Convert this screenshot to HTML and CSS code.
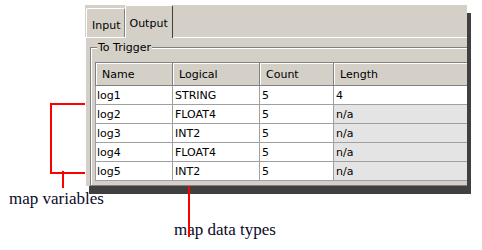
FILE: index.html
```html
<!DOCTYPE html>
<html>
<head>
<meta charset="utf-8">
<title>Output mapping</title>
<link rel="stylesheet" href="styles.css">
</head>
<body>
<div class="figure">
	<div class="frame">
		<div class="shadow"></div>
		<div class="widget">
			<div class="tab-strip">
				<span class="tab">Input</span>
				<span class="tab active">Output</span>
			</div>
			<div class="tab-page">
				<fieldset class="group">
					<legend>To Trigger</legend>
					<table class="grid">
						<colgroup>
							<col class="c-name"><col class="c-logical"><col class="c-count"><col class="c-length">
						</colgroup>
						<thead>
							<tr><th>Name</th><th>Logical</th><th>Count</th><th>Length</th></tr>
						</thead>
						<tbody>
							<tr><td>log1</td><td>STRING</td><td>5</td><td>4</td></tr>
							<tr><td>log2</td><td>FLOAT4</td><td>5</td><td class="ro">n/a</td></tr>
							<tr><td>log3</td><td>INT2</td><td>5</td><td class="ro">n/a</td></tr>
							<tr><td>log4</td><td>FLOAT4</td><td>5</td><td class="ro">n/a</td></tr>
							<tr><td>log5</td><td>INT2</td><td>5</td><td class="ro">n/a</td></tr>
						</tbody>
					</table>
				</fieldset>
			</div>
		</div>
	</div>

	<!-- callouts -->
	<div class="bracket"></div>
	<div class="stem stem-vars"></div>
	<div class="stem stem-types"></div>
	<span class="note note-vars">map variables</span>
	<span class="note note-types">map data types</span>
</div>
</body>
</html>
```

FILE: styles.css
```css
html, body {margin: 0; padding: 0; background: #fff;}

.figure {
	position: relative;
	width: 482px;
	height: 250px;
	overflow: hidden;
	padding-top: 5px;
	box-sizing: border-box;
}

/* widget and its dark drop shadow share one grid cell */
.frame {
	display: grid;
	width: 386px;
	margin-left: 85px;
}

.shadow,
.widget {
	grid-area: 1 / 1;
}

.shadow {
	margin: 8px 0 0 4px;
	background: #404040;
}

.widget {
	margin: 0 4px 8px 0;
	height: 181px;
	background: #d4d0c8;
	font: 11px "DejaVu Sans", Verdana, sans-serif;
	color: #000;
	overflow: hidden;
	position: relative;
	z-index: 2;
}

.tab-strip {
	display: flex;
	align-items: flex-end;
	height: 32px;
	padding-left: 1px;
}

.tab {
	display: block;
	box-sizing: border-box;
	height: 29px;
	padding: 10px 4px 0 5px;
	border-top: 1px solid #fff;
	border-left: 1px solid #fff;
	border-right: 1px solid #808080;
	border-radius: 2px 2px 0 0;
	line-height: 13px;
}

.tab.active {
	height: 33px;
	margin-bottom: -1px;
	padding: 11px 4px 0 3px;
	border-right: 1px solid #404040;
	background: #d4d0c8;
	position: relative;
	z-index: 1;
}

.tab-page {
	height: 149px;
	border-top: 1px solid #fff;
	border-left: 1px solid #fff;
	box-sizing: border-box;
}

.group {
	margin: 3px 0 0 4px;
	padding: 8px 0 4px 4px;
	border: 1px solid #808080;
	box-shadow: inset 1px 1px 0 #fff, 1px 1px 0 #fff;
	width: 400px;
}

.group legend {
	margin-left: 2px;
	padding: 0 1px;
	background: #d4d0c8;
	line-height: 13px;
}

.grid {
	border-collapse: collapse;
	table-layout: fixed;
	width: 378px;
	background: #fff;
}

.c-name {width: 77px;}
.c-logical {width: 87px;}
.c-count {width: 74px;}
.c-length {width: 140px;}

.grid th {
	height: 22px;
	padding: 0 0 0 6px;
	background: #d4d0c8;
	font-weight: normal;
	text-align: left;
	border: 1px solid #808080;
	box-shadow: inset 1px 1px 0 #fff;
}

.grid td {
	height: 18px;
	padding: 0 2px;
	border: 1px solid #a0a0a0;
	white-space: nowrap;
}

.grid td:first-child {padding-left: 1px;}
.grid td.ro {background: #e4e4e4;}

/* callouts */
.bracket {
	position: absolute;
	left: 50px;
	top: 103px;
	width: 33px;
	height: 67px;
	border: 2px solid #f00;
	border-right: 0;
}

.stem {
	position: absolute;
	width: 2px;
	background: #f00;
}

.stem-vars {left: 62px; top: 171px; height: 17px;}
.stem-types {left: 188px; top: 182px; height: 55px; z-index: 1;}

.note {
	position: absolute;
	font: 17px "Liberation Serif", "Times New Roman", serif;
	color: #0a0a28;
	white-space: nowrap;
}

.note-vars {left: 9px; top: 189px;}
.note-types {left: 174px; top: 220px;}
```
